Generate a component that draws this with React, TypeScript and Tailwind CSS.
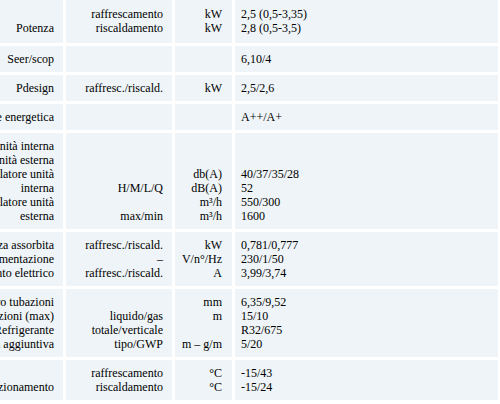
type Row = {
  cells: string[][];
  tall?: boolean;
};

const rows: Row[] = [
  {
    cells: [
      ["Potenza"],
      ["raffrescamento", "riscaldamento"],
      ["kW", "kW"],
      ["2,5 (0,5-3,35)", "2,8 (0,5-3,5)"],
    ],
    tall: true,
  },
  { cells: [["Seer/scop"], [""], [""], ["6,10/4"]] },
  { cells: [["Pdesign"], ["raffresc./riscald."], ["kW"], ["2,5/2,6"]] },
  { cells: [["Classe energetica"], [""], [""], ["A++/A+"]] },
  {
    cells: [
      [
        "Rumorosità unità interna",
        "Rumorosità unità esterna",
        "Portata ventilatore unità",
        "interna",
        "Portata ventilatore unità",
        "esterna",
      ],
      ["", "", "", "H/M/L/Q", "", "max/min"],
      ["", "", "db(A)", "dB(A)", "m³/h", "m³/h"],
      ["", "", "40/37/35/28", "52", "550/300", "1600"],
    ],
  },
  {
    cells: [
      ["Potenza assorbita", "Alimentazione", "Assorbimento elettrico"],
      ["raffresc./riscald.", "–", "raffresc./riscald."],
      ["kW", "V/n°/Hz", "A"],
      ["0,781/0,777", "230/1/50", "3,99/3,74"],
    ],
  },
  {
    cells: [
      ["Diametro tubazioni", "Lunghezza tubazioni (max)", "Refrigerante", "Carica aggiuntiva"],
      ["", "liquido/gas", "totale/verticale", "tipo/GWP"],
      ["mm", "m", "", "m – g/m"],
      ["6,35/9,52", "15/10", "R32/675", "5/20"],
    ],
  },
  {
    cells: [
      ["", "Campo di funzionamento"],
      ["raffrescamento", "riscaldamento"],
      ["°C", "°C"],
      ["-15/43", "-15/24"],
    ],
  },
];

const cellPad = [
  "pr-[9px] text-right",
  "pr-[9px] text-right",
  "pr-[10px] text-right",
  "pl-[6px] text-left",
];

const App = () => {
  return (
    <div className="w-[500px] h-[404px] overflow-hidden bg-white text-black font-[family-name:Liberation_Serif,serif] text-[12px]">
      <div className="ml-[-97px] grid grid-cols-[160px_106px_57px_263px] gap-[3px]">
        {rows.map((row, i) =>
          row.cells.map((lines, j) => (
            <div
              key={`${i}-${j}`}
              className={`flex flex-col justify-end bg-[#eef4f7] whitespace-nowrap ${
                row.tall ? "pt-[7px] pb-[8px]" : "py-[6px]"
              } ${cellPad[j]}`}
            >
              {lines.map((line, k) => (
                <div key={k} className="h-[14px] leading-[14px]">
                  {line}
                </div>
              ))}
            </div>
          ))
        )}
      </div>
    </div>
  );
};

export default App;
